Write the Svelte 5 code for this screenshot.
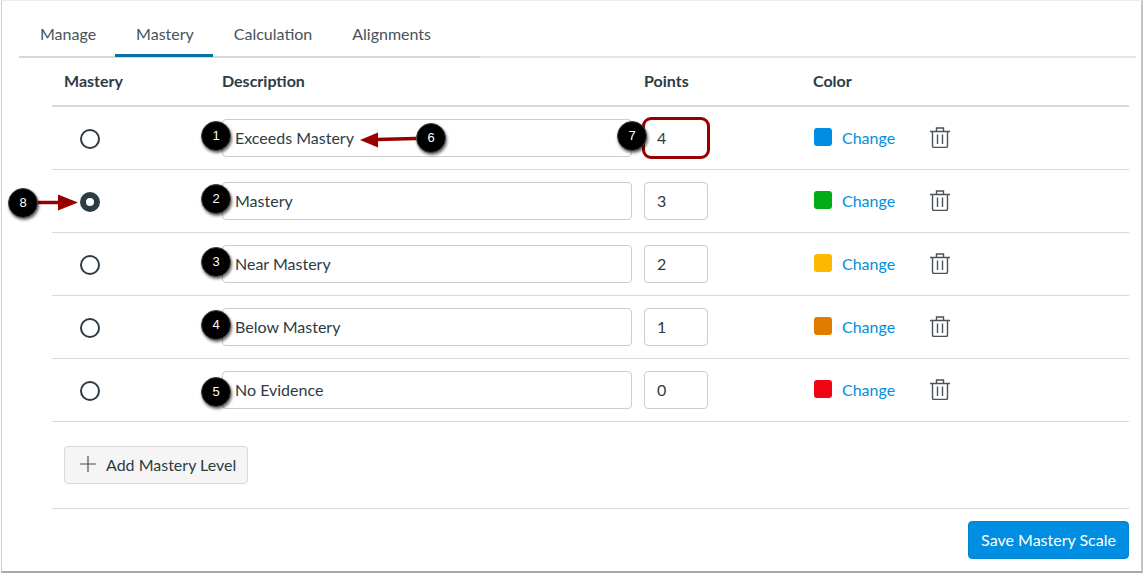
<script>
  const levels = [
    { name: 'Exceeds Mastery', points: 4, color: '#008ee2' },
    { name: 'Mastery', points: 3, color: '#00ac18', checked: true },
    { name: 'Near Mastery', points: 2, color: '#fcb900' },
    { name: 'Below Mastery', points: 1, color: '#e07d00' },
    { name: 'No Evidence', points: 0, color: '#ee0612' }
  ];
  const tabs = ['Manage', 'Mastery', 'Calculation', 'Alignments'];
  // numbered callouts drawn over the screenshot
  const callouts = [
    { n: 1, x: 216, y: 136 },
    { n: 2, x: 216, y: 199 },
    { n: 3, x: 216, y: 262 },
    { n: 4, x: 216, y: 325 },
    { n: 5, x: 216, y: 392 },
    { n: 6, x: 431, y: 138 },
    { n: 7, x: 632, y: 136 },
    { n: 8, x: 23, y: 203 }
  ];
</script>

<div class="frame">
  <div class="tabs">
    <nav class="tab-list">
      {#each tabs as tab}
        <span class="tab" class:active={tab == 'Mastery'}>{tab}</span>
      {/each}
    </nav>
  </div>

  <div class="table">
    <div class="row head">
      <div>Mastery</div>
      <div>Description</div>
      <div>Points</div>
      <div>Color</div>
    </div>
    {#each levels as level, i}
      <div class="row">
        <div class="radio-cell"><span class="radio" class:checked={level.checked}></span></div>
        <div class="input desc">{level.name}</div>
        <div class="input points" class:focus={i == 0}>{level.points}</div>
        <div class="color">
          <span class="swatch" style="background:{level.color}"></span>
          <span class="change">Change</span>
          <svg class="trash" width="20" height="21" viewBox="0 0 20 21" fill="none" stroke="#47535d" stroke-width="1.4">
            <path d="M0 4.500h20M6.500 4.500V1h7v3.500M2.500 4.500v14.500a1.500 1.500 0 0 0 1.500 1.500h12a1.500 1.500 0 0 0 1.500-1.500V4.500M7.500 7.500v9.500M12.500 7.500v9.500" />
          </svg>
        </div>
      </div>
    {/each}
  </div>

  <div class="add-wrap">
    <div class="add">
      <svg width="16" height="16" viewBox="0 0 16 16" stroke="#47535d" stroke-width="1.200"><path d="M8 0v16M0 8h16" /></svg>
      Add Mastery Level
    </div>
  </div>

  <div class="foot">
    <div class="save">Save Mastery Scale</div>
  </div>

  <svg class="arrows" width="1143" height="575" viewBox="0 0 1143 575">
    <path d="M416 138.500 L376 139.500" stroke="#980000" stroke-width="3.500" />
    <path d="M360 140 L378 132.500 L378 147.500 Z" fill="#980000" />
    <path d="M38 202.500 L60 202.500" stroke="#980000" stroke-width="3.500" />
    <path d="M78 202.500 L58 194.500 L58 210.500 Z" fill="#980000" />
  </svg>

  {#each callouts as c}
    <span class="callout" style="left:{c.x - 15}px;top:{c.y - 15}px">{c.n}</span>
  {/each}
</div>

<style>
  :global(body) {
    margin: 0;
    background: #fff;
  }
  .frame {
    position: relative;
    box-sizing: border-box;
    width: 1142px;
    height: 573px;
    margin-left: 1px;
    padding-top: 1px;
    background: #fff;
    border-left: 1px solid #cfcfcf;
    border-top: 1px solid #ececec;
    border-right: 2px solid #c4c4c4;
    border-bottom: 2px solid #a8a8a8;
    font-family: Lato, sans-serif;
    color: #2d3b45;
    overflow: hidden;
  }
  .tabs {
    margin-left: 17px;
    width: 1117px;
    height: 56px;
    box-sizing: border-box;
    border-bottom: 2px solid #e1e6e9;
  }
  .tab-list {
    display: flex;
    box-sizing: border-box;
    width: 462px;
    height: 56px;
    border-bottom: 2px solid #d5dbd8;
  }
  .tab {
    box-sizing: border-box;
    height: 55px;
    padding: 21px 19px 0 21px;
    font-size: 16px;
    line-height: 22px;
    color: #47535d;
  }
  .tab.active {
    border-bottom: 3px solid #0770a3;
  }
  .table {
    margin-left: 50px;
    width: 1077px;
  }
  .row {
    display: grid;
    grid-template-columns: 158px 422px 169px 1fr;
    align-items: center;
    box-sizing: border-box;
    height: 63px;
    padding-left: 12px;
    border-bottom: 1px solid #d4d9dc;
  }
  .row.head {
    height: 49px;
    padding-bottom: 2px;
    font-size: 16px;
    font-weight: 700;
    border-bottom: 2px solid #d4d9dc;
  }
  .radio-cell {
    padding-left: 16px;
    padding-top: 1px;
    display: flex;
    align-items: center;
  }
  .radio {
    box-sizing: border-box;
    width: 20px;
    height: 20px;
    border-radius: 50%;
    border: 2px solid #2d3b45;
    background: #fff;
  }
  .radio.checked {
    border: 6px solid #2d3b45;
  }
  .input {
    box-sizing: border-box;
    height: 38px;
    padding: 0 12px;
    border: 1px solid #c7cdd1;
    border-radius: 4px;
    font-size: 16px;
    line-height: 35px;
    background: #fff;
  }
  .desc {
    width: 410px;
  }
  .points {
    width: 64px;
  }
  .points.focus {
    outline: 3px solid #980000;
    outline-offset: -1px;
    border-radius: 7px;
  }
  .color {
    display: flex;
    align-items: center;
  }
  .swatch {
    width: 18px;
    height: 18px;
    border-radius: 3px;
    margin-left: 1px;
    margin-bottom: 3px;
  }
  .change {
    margin-left: 10px;
    margin-bottom: 2px;
    font-size: 16px;
    color: #008ee2;
    width: 88px;
  }
  .trash {
    margin-bottom: 1px;
  }
  .add-wrap {
    margin-left: 50px;
    width: 1077px;
    box-sizing: border-box;
    height: 87px;
    padding: 24px 0 0 12px;
    border-bottom: 1px solid #d4d9dc;
  }
  .add {
    box-sizing: border-box;
    display: inline-flex;
    align-items: center;
    gap: 10px;
    height: 38px;
    width: 184px;
    padding-left: 15px;
    padding-bottom: 2px;
    background: #f5f5f5;
    border: 1px solid #d4d9dc;
    border-radius: 4px;
    font-size: 16px;
    color: #2d3b45;
  }
  .foot {
    display: flex;
    justify-content: flex-end;
    width: 1127px;
    padding-top: 12px;
  }
  .save {
    box-sizing: border-box;
    width: 161px;
    height: 38px;
    background: #008ee2;
    border: 1px solid #0084d1;
    border-radius: 4px;
    color: #fff;
    font-size: 16px;
    line-height: 36px;
    text-align: center;
  }
  .arrows {
    position: absolute;
    left: -2px;
    top: -1px;
    pointer-events: none;
  }
  .callout {
    position: absolute;
    margin-left: -2px;
    margin-top: -1px;
    box-sizing: border-box;
    width: 30px;
    height: 30px;
    border-radius: 50%;
    background: #000;
    border: 1px solid #444;
    box-shadow: 1px 2px 3px rgba(0, 0, 0, 0.6);
    color: #fff;
    font-family: "Liberation Sans", sans-serif;
    font-size: 13px;
    line-height: 28px;
    text-align: center;
  }
</style>
